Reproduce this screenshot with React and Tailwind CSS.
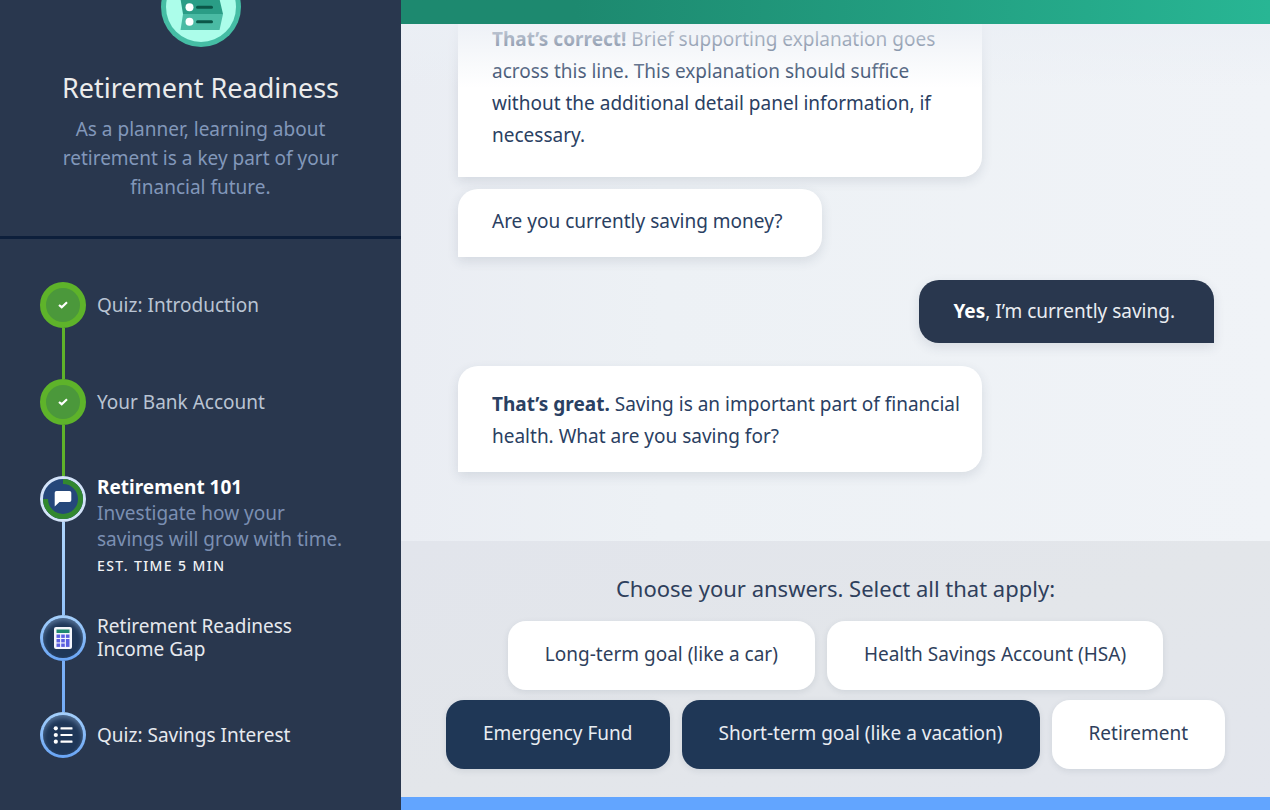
import React, { useState } from 'react';

const CheckIcon = () => (
  <svg viewBox="0 0 12 10" className="h-[10px] w-3" fill="none" aria-hidden="true">
    <path d="M2 5 4.700 7.200 10 2.300" stroke="#fff" strokeWidth="2.200" />
  </svg>
);

const ChatIcon = () => (
  <svg viewBox="0 0 18 18" className="h-[18px] w-[18px]" fill="#fff" aria-hidden="true">
    <path d="M2.500 1h13A1.800 1.800 0 0 1 17.300 2.800v7.400A1.800 1.800 0 0 1 15.500 12H5.500L.7 16.500V2.800A1.800 1.800 0 0 1 2.500 1Z" />
  </svg>
);

const CalculatorIcon = () => (
  <svg viewBox="0 0 18 22" className="h-[22px] w-[18px]" aria-hidden="true">
    <rect width="18" height="22" rx="2" fill="#f4f6fb" />
    <rect x="2.500" y="2.500" width="13" height="3.500" fill="#1f8a70" />
    <g fill="#5a5fe0">
      <rect x="2.500" y="7.500" width="3.600" height="3.400" />
      <rect x="7.200" y="7.500" width="3.600" height="3.400" />
      <rect x="11.900" y="7.500" width="3.600" height="3.400" />
      <rect x="2.500" y="12" width="3.600" height="3.400" />
      <rect x="7.200" y="12" width="3.600" height="3.400" />
      <rect x="2.500" y="16.500" width="3.600" height="3.400" />
      <rect x="7.200" y="16.500" width="3.600" height="3.400" />
      <rect x="11.900" y="12" width="3.600" height="7.900" />
    </g>
  </svg>
);

const ListIcon = () => (
  <svg viewBox="0 0 20 18" className="h-[18px] w-5" fill="#fff" aria-hidden="true">
    <circle cx="2.800" cy="2.300" r="2.100" />
    <circle cx="2.800" cy="9" r="2.100" />
    <circle cx="2.800" cy="15.700" r="2.100" />
    <rect x="7.500" y="1.200" width="12" height="2.200" rx="0.500" />
    <rect x="7.500" y="7.900" width="12" height="2.200" rx="0.500" />
    <rect x="7.500" y="14.600" width="12" height="2.200" rx="0.500" />
  </svg>
);

const CourseBadge = () => (
  <svg viewBox="0 0 80 80" className="h-20 w-20 shrink-0" aria-hidden="true">
    <circle cx="40" cy="40" r="40" fill="#45bda4" />
    <circle cx="40" cy="40" r="35" fill="#acfdea" />
    <path d="M22 17h40l-3.500 15L62 47H22l-2.500-15Z" fill="#2a9d86" />
    <path d="M22 47h40l-3.500 16H19.500Z" fill="#4abba4" />
    <g fill="#fff">
      <circle cx="28.500" cy="25" r="4" />
      <circle cx="28.500" cy="40.200" r="4" />
      <circle cx="28.500" cy="54.700" r="4" />
    </g>
    <g fill="#0b5748">
      <rect x="35" y="23.500" width="17" height="3" rx="1.500" />
      <rect x="35" y="38.700" width="17" height="3" rx="1.500" />
      <rect x="35" y="53.200" width="17" height="3" rx="1.500" />
    </g>
  </svg>
);

const DoneMarker = () => (
  <div className="flex h-[46px] w-[46px] shrink-0 items-center justify-center rounded-full border-[6px] border-[#5eb32a] bg-[#4b983b]">
    <CheckIcon />
  </div>
);

// Ring shows how much of the current step is finished
const ProgressMarker = () => (
  <div className="grid h-[46px] w-[46px] shrink-0 place-items-center">
    <svg viewBox="0 0 46 46" className="col-start-1 row-start-1 h-[46px] w-[46px]" aria-hidden="true">
      <circle cx="23" cy="23" r="21.500" fill="#25477a" stroke="#d3e3f9" strokeWidth="3" />
      <path d="M23 5.500A17.500 17.500 0 1 1 5.500 23" fill="none" stroke="#32882f" strokeWidth="5" />
    </svg>
    <div className="col-start-1 row-start-1">
      <ChatIcon />
    </div>
  </div>
);

const UpcomingMarker = ({ children }) => (
  <div className="h-[46px] w-[46px] shrink-0 rounded-full bg-linear-to-b from-[#a6d0fb] to-[#68a4f5] p-[3px]">
    <div className="flex h-full w-full items-center justify-center rounded-full bg-[#1f3758] shadow-[inset_0_3px_5px_rgba(150,185,225,0.45)]">
      {children}
    </div>
  </div>
);

const Step = ({ marker, line, children }) => (
  <li className="flex gap-[11px]">
    <div className="flex flex-col items-center">
      {marker}
      {line && <div className={`w-[3px] flex-1 ${line}`}></div>}
    </div>
    {children}
  </li>
);

const Sidebar = () => (
  <aside className="w-[401px] shrink-0 bg-[#29374e]">
    <header className="border-b-[3px] border-[#0d1f3b] px-12 pb-[34px] text-center">
      <div className="flex h-[47px] items-end justify-center overflow-hidden">
        <CourseBadge />
      </div>
      <h1 className="mt-[23px] text-[27px] leading-9 text-[#ececec]">Retirement Readiness</h1>
      <p className="mt-[9px] text-[19px] leading-[29px] text-[#8297ba]">
        As a planner, learning about
        <br />
        retirement is a key part of your
        <br />
        financial future.
      </p>
    </header>

    <ol className="pl-10 pt-[43px] text-[19px]">
      <Step marker={<DoneMarker />} line="bg-[#5eb32a]">
        <div className="h-[97px]">
          <a href="#intro" className="flex h-[46px] items-center text-[#b9c4d3]">Quiz: Introduction</a>
        </div>
      </Step>
      <Step marker={<DoneMarker />} line="bg-[#5eb32a]">
        <div className="h-[97px]">
          <a href="#bank" className="flex h-[46px] items-center text-[#b9c4d3]">Your Bank Account</a>
        </div>
      </Step>
      <Step marker={<ProgressMarker />} line="bg-linear-to-b from-[#b0d5fb] to-[#93c3fa]">
        <div className="h-[139px]">
          <a href="#retirement" className="block font-bold leading-[22px] text-white">Retirement 101</a>
          <p className="mt-[2px] leading-[26px] text-[#7b8fb2]">
            Investigate how your
            <br />
            savings will grow with time.
          </p>
          <p className="text-sm font-medium leading-7 tracking-widest text-[#f0f2f5]">EST. TIME 5 MIN</p>
        </div>
      </Step>
      <Step marker={<UpcomingMarker><CalculatorIcon /></UpcomingMarker>} line="bg-linear-to-b from-[#7bb0f7] to-[#74acf6]">
        <div className="h-[97px]">
          <a href="#gap" className="block leading-[23px] text-[#e6e9ee]">
            Retirement Readiness
            <br />
            Income Gap
          </a>
        </div>
      </Step>
      <Step marker={<UpcomingMarker><ListIcon /></UpcomingMarker>}>
        <a href="#interest" className="flex h-[46px] items-center text-[#e6e9ee]">Quiz: Savings Interest</a>
      </Step>
    </ol>
  </aside>
);

const answerRows = [
  ['Long-term goal (like a car)', 'Health Savings Account (HSA)'],
  ['Emergency Fund', 'Short-term goal (like a vacation)', 'Retirement']
];

const AnswerPanel = () => {
  const [selected, setSelected] = useState(['Emergency Fund', 'Short-term goal (like a vacation)']);

  const toggle = (answer) => {
    setSelected(
      selected.includes(answer) ? selected.filter((item) => item !== answer) : [...selected, answer]
    );
  };

  return (
    <section className="bg-linear-to-br from-[#e2e5ec] via-[#e3e6ea] to-[#e3e6ed] pb-7 pt-[31px] text-center">
      <h2 className="text-[22px] leading-8 text-[#2f3f5c]">Choose your answers. Select all that apply:</h2>
      <div className="mt-[17px] flex flex-col gap-[10px]">
        {answerRows.map((row) => (
          <div key={row[0]} className="flex justify-center gap-3">
            {row.map((answer) => (
              <button
                key={answer}
                type="button"
                aria-pressed={selected.includes(answer)}
                onClick={() => toggle(answer)}
                className={`h-[69px] rounded-[18px] px-[37px] pb-[2px] text-[19px] shadow-[0_2px_6px_rgba(40,55,80,0.1)] ${
                  selected.includes(answer) ? 'bg-[#1f3756] text-[#e9edf2]' : 'bg-white text-[#2f3f5c]'
                }`}
              >
                {answer}
              </button>
            ))}
          </div>
        ))}
      </div>
    </section>
  );
};

const App = () => {
  return (
    <div className="flex h-screen overflow-hidden font-['Noto_Sans',sans-serif]">
      <Sidebar />

      <main className="flex min-w-0 flex-1 flex-col">
        <div className="h-6 shrink-0 bg-linear-to-r from-[#1d896f] from-20% to-[#28b694]"></div>

        {/* Conversation, newest message at the bottom */}
        <div className="relative flex min-h-0 flex-1 flex-col justify-end overflow-hidden bg-linear-to-r from-[#eaedf3] via-[#edf1f5] via-30% to-[#f0f3f7] pb-[69px] pl-[57px] pr-14 text-[19px] leading-8 text-[#2a4062]">
          <div className="w-[524px] rounded-[20px] rounded-bl-none bg-white pb-[26px] pl-[34px] pr-5 pt-[22px] shadow-[0_4px_12px_rgba(40,55,80,0.12)]">
            <strong>That’s correct!</strong> Brief supporting explanation goes
            <br />
            across this line. This explanation should suffice
            <br />
            without the additional detail panel information, if
            <br />
            necessary.
          </div>
          <div className="mt-3 self-start rounded-[20px] rounded-bl-none bg-white pb-5 pl-[34px] pr-[39px] pt-4 shadow-[0_4px_12px_rgba(40,55,80,0.12)]">
            Are you currently saving money?
          </div>
          <div className="mt-[23px] self-end rounded-[20px] rounded-br-none bg-[#29374e] pb-4 pl-[34px] pr-[39px] pt-[15px] text-[#e9edf2] shadow-[0_4px_12px_rgba(40,55,80,0.12)]">
            <strong className="text-white">Yes</strong>, I’m currently saving.
          </div>
          <div className="mt-[23px] w-[524px] rounded-[20px] rounded-bl-none bg-white pb-5 pl-[34px] pr-5 pt-[22px] shadow-[0_4px_12px_rgba(40,55,80,0.12)]">
            <strong>That’s great.</strong> Saving is an important part of financial
            <br />
            health. What are you saving for?
          </div>
          <div className="pointer-events-none absolute inset-x-0 top-0 h-16 bg-linear-to-b from-[#ebeff5]/85 to-transparent"></div>
        </div>

        <AnswerPanel />
        <div className="h-[13px] shrink-0 bg-[#62a5ff]"></div>
      </main>
    </div>
  );
};

export default App;
